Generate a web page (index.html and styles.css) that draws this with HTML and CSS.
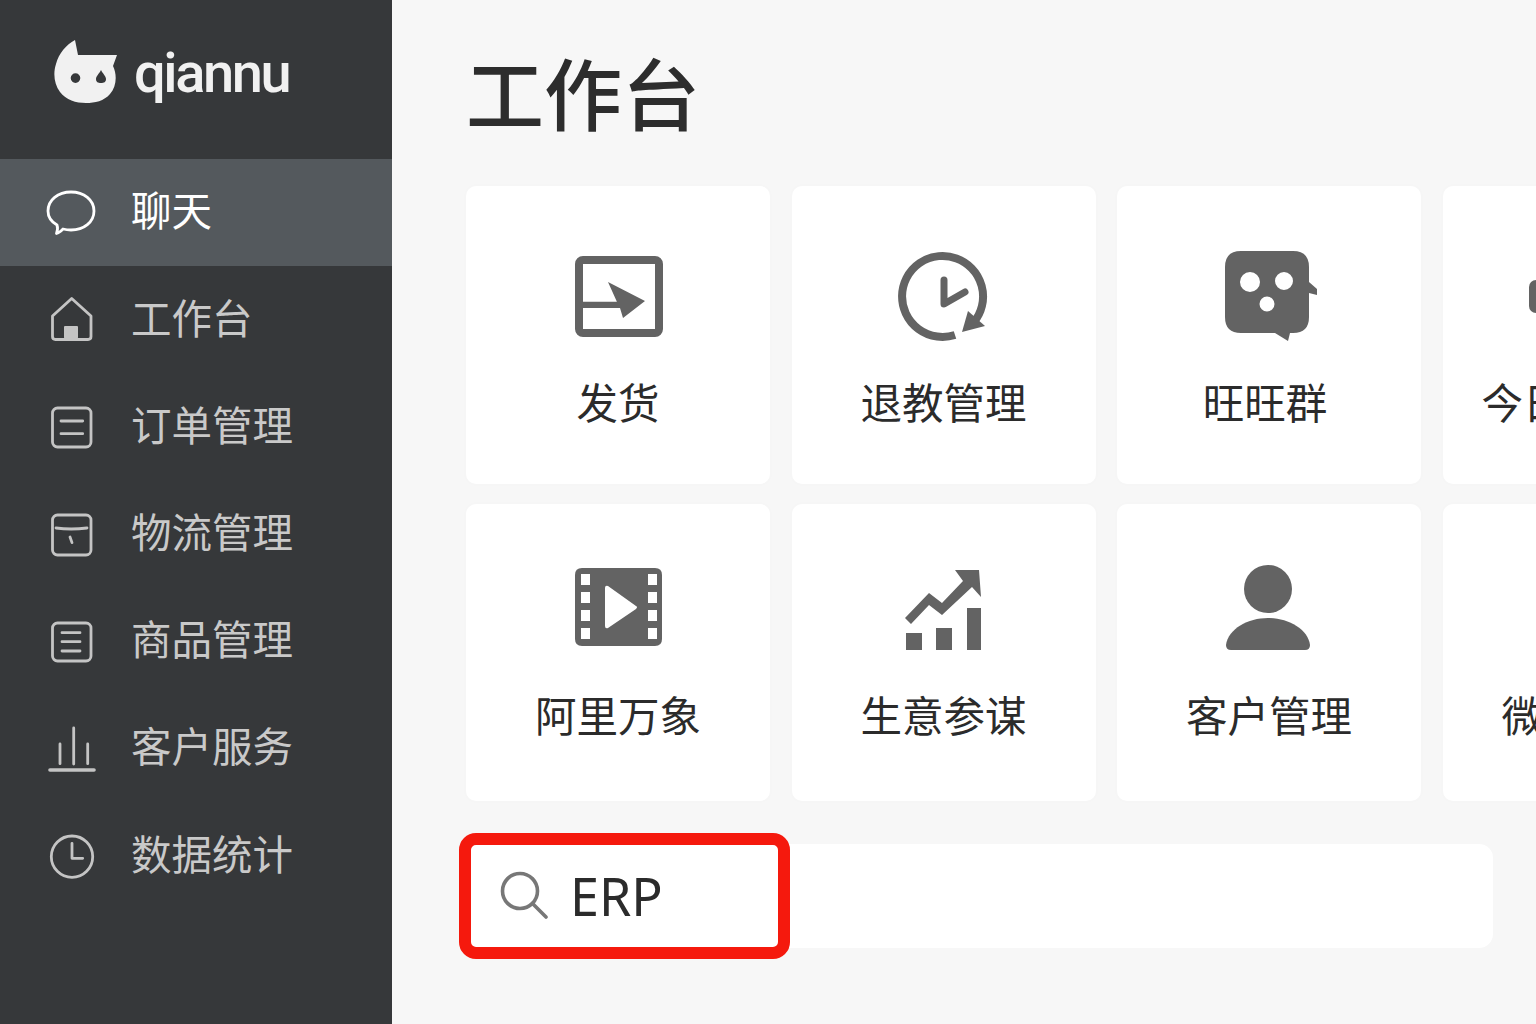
FILE: index.html
```html
<!DOCTYPE html>
<html lang="zh-CN">

<head>
  <meta charset="UTF-8">
  <meta name="viewport" content="width=device-width, initial-scale=1.0">
  <title>工作台</title>
  <link rel="stylesheet" href="styles.css">
</head>

<body>
  <div class="app">
    <!-- 左侧导航 -->
    <aside class="side">
      <div class="logo">
        <svg class="logo-cat" viewBox="0 0 64 64">
          <path fill="#f1f1f1" fill-rule="evenodd" d="M21 0 L24 15 L63 15 L59 26 C63 34 63 46 56 54 C50 61 41 63 32 63 C22 63 12 60 6 52 C0 44 -1 33 2 24 C5 13 12 5 21 0 Z M21.500 33.300 A4.800 4.800 0 1 0 21.500 42.900 A4.800 4.800 0 1 0 21.500 33.300 Z M47 30 C45 34 42 36 42 39 C42 42 44 43 47 43 C50 43 52 42 52 39 C52 36 49 34 47 30 Z" />
        </svg>
        <span class="logo-text">qiannu</span>
      </div>
      <nav class="nav">
        <a class="nav-item nav-item-on">
          <svg class="nav-icon" viewBox="0 0 50 48">
            <path d="M11 37 C4 33 2 28 2 23 C2 12 12 4 25 4 C38 4 48 12 48 23 C48 34 38 42 25 42 C22 42 19 41.500 17 41 C15 43 13 45 10.500 45.500 C11.500 43 12 40 11 37 Z" />
          </svg>
          <span>聊天</span>
        </a>
        <a class="nav-item">
          <svg class="nav-icon" viewBox="0 0 50 48">
            <path d="M6.500 21 L25.700 3.500 L45 21 V41.500 Q45 44.500 42 44.500 H9.500 Q6.500 44.500 6.500 41.500 Z" />
            <rect class="nav-fill" x="18" y="31" width="14" height="12.500" rx="1" />
          </svg>
          <span>工作台</span>
        </a>
        <a class="nav-item">
          <svg class="nav-icon" viewBox="0 0 50 48">
            <rect x="6.500" y="5" width="38.500" height="39" rx="5" />
            <path d="M15 18 H36.700 M15 30.700 H36.700" />
          </svg>
          <span>订单管理</span>
        </a>
        <a class="nav-item">
          <svg class="nav-icon" viewBox="0 0 50 48">
            <rect x="6.500" y="5" width="38.500" height="40" rx="5" />
            <path d="M10 18 Q25 20 41 18 M24 27 L26 32.600" />
          </svg>
          <span>物流管理</span>
        </a>
        <a class="nav-item">
          <svg class="nav-icon" viewBox="0 0 50 48">
            <rect x="6.500" y="6" width="38.500" height="38" rx="5" />
            <path d="M16 15.700 H34 M16 24.700 H34 M16 34 H34" />
          </svg>
          <span>商品管理</span>
        </a>
        <a class="nav-item">
          <svg class="nav-icon" viewBox="0 0 50 48">
            <path d="M14 20 V39.700 M27.700 4 V40 M41.700 20 V39.700" />
            <path class="nav-base" d="M4 46 H48" />
          </svg>
          <span>客户服务</span>
        </a>
        <a class="nav-item">
          <svg class="nav-icon" viewBox="0 0 50 48">
            <circle cx="26" cy="25.700" r="20.700" />
            <path d="M26 12.300 V27.300 H36.700" />
          </svg>
          <span>数据统计</span>
        </a>
      </nav>
    </aside>

    <main class="main">
      <h1 class="title">工作台</h1>

      <div class="tiles">
        <div class="tile">
          <div class="tile-icon">
            <svg class="icon-send" viewBox="0 0 88 81">
              <rect class="ic-line" x="4" y="4" width="80" height="73" rx="4" />
              <path d="M8 45.700 H46 V52 H8 Z M33 26 L70 45 L48 62 L45 52 V46 H42 Z" />
            </svg>
          </div>
          <div class="tile-name">发货</div>
        </div>
        <div class="tile">
          <div class="tile-icon">
            <svg class="icon-refund" viewBox="0 0 90 90">
              <path class="ic-line" d="M57 84 A40.500 40.500 0 1 1 76 71" />
              <path d="M70 60 L87 75 L64 81 Z" />
              <path class="ic-hand" d="M46 29 V53 L67 41" />
            </svg>
          </div>
          <div class="tile-name">退教管理</div>
        </div>
        <div class="tile">
          <div class="tile-icon">
            <svg class="icon-group" viewBox="0 0 93 91">
              <path fill-rule="evenodd" d="M16 0 H68 Q84 0 84 16 V31 L92 38 L92 44 L84 42 V66 Q84 82 68 82 H65 L63 90 L50 82 H16 Q0 82 0 66 V16 Q0 0 16 0 Z M25 21 A10 10 0 1 0 25 41 A10 10 0 1 0 25 21 Z M59 21 A9 9 0 1 0 59 39 A9 9 0 1 0 59 21 Z M42 45.500 A7.500 7.500 0 1 0 42 60.500 A7.500 7.500 0 1 0 42 45.500 Z" />
            </svg>
          </div>
          <div class="tile-name tile-name-left">旺旺群</div>
        </div>
        <div class="tile tile-cut">
          <div class="tile-icon">
            <svg class="icon-edge" viewBox="0 0 40 33">
              <rect width="40" height="33" rx="7" />
            </svg>
          </div>
          <div class="tile-name">今日任务</div>
        </div>

        <div class="tile tile-low">
          <div class="tile-icon">
            <svg class="icon-film" viewBox="0 0 87 78">
              <path fill-rule="evenodd" d="M7 0 H80 Q87 0 87 7 V71 Q87 78 80 78 H7 Q0 78 0 71 V7 Q0 0 7 0 Z M6 6 V17 H15 V6 Z M6 24 V35 H15 V24 Z M6 42 V53 H15 V42 Z M6 60 V71 H15 V60 Z M73 6 V17 H82 V6 Z M73 24 V35 H82 V24 Z M73 42 V53 H82 V42 Z M73 60 V71 H82 V60 Z M30 20 V58 Q30 61 33 60 L61 41 Q63 39 61 38 L33 18 Q30 17 30 20 Z" />
            </svg>
          </div>
          <div class="tile-name">阿里万象</div>
        </div>
        <div class="tile tile-low">
          <div class="tile-icon">
            <svg class="icon-chart" viewBox="0 0 77 80">
              <path d="M0 48 L24 23 L37 33 L58 11 L50 0 L74 0 L76 27 L67 17 L37 45 L24 35 L6 54 Z" />
              <rect x="1" y="63" width="16" height="17" />
              <rect x="31" y="58" width="16" height="22" />
              <rect x="62" y="38" width="14" height="42" />
            </svg>
          </div>
          <div class="tile-name">生意参谋</div>
        </div>
        <div class="tile tile-low">
          <div class="tile-icon">
            <svg class="icon-user" viewBox="0 0 84 85">
              <circle cx="42" cy="24" r="24" />
              <path d="M5 85 Q0 85 0 80 C2 64 22 53 42 53 C62 53 82 64 84 80 Q84 85 79 85 Z" />
            </svg>
          </div>
          <div class="tile-name">客户管理</div>
        </div>
        <div class="tile tile-low tile-cut tile-cut-far">
          <div class="tile-icon"></div>
          <div class="tile-name">微信管理</div>
        </div>
      </div>

      <div class="search">
        <div class="search-hit">
          <svg class="search-icon" viewBox="0 0 48 48">
            <circle cx="20" cy="20" r="17.500" />
            <path d="M32.500 32.500 L46 46" />
          </svg>
          <span class="search-text">ERP</span>
        </div>
      </div>
    </main>
  </div>
</body>

</html>
```

FILE: styles.css
```css
html,
body {
  margin: 0;
  height: 100%;
  overflow: hidden;
}

body {
  font-family: "Noto Sans CJK SC", "Noto Sans", sans-serif;
  background-color: #f7f7f7;
}

.app {
  display: flex;
  width: 1536px;
  height: 1024px;
}

/* 侧边栏 */
.side {
  flex: none;
  width: 392px;
  background-color: #36383a;
}

.logo {
  display: flex;
  align-items: center;
  height: 158.6px;
  padding-left: 54px;
  box-sizing: border-box;
}

.logo-cat {
  width: 64px;
  height: 64px;
  margin-top: -14px;
}

.logo-text {
  margin-left: 16px;
  margin-top: -13px;
  font-family: Roboto, sans-serif;
  font-size: 56px;
  font-weight: 500;
  letter-spacing: -2.4px;
  line-height: 1;
  color: #f1f1f1;
}

.nav-item {
  display: flex;
  align-items: center;
  height: 107.2px;
  padding-left: 46px;
  font-size: 40.5px;
  color: #c9c9c9;
}

.nav-item span {
  margin-left: 35px;
  margin-top: -5px;
  line-height: 1;
}

.nav-item-on {
  background-color: #54595d;
  color: #fff;
}

.nav-icon {
  flex: none;
  width: 50px;
  height: 48px;
  fill: none;
  stroke: #c4c4c4;
  stroke-width: 2.8;
  stroke-linecap: round;
  stroke-linejoin: round;
}

.nav-item-on .nav-icon {
  stroke: #fff;
}

.nav-icon .nav-fill {
  fill: #c4c4c4;
  stroke: none;
}

.nav-icon .nav-base {
  stroke-width: 3.6;
}

/* 主区域 */
.main {
  flex: 1;
  min-width: 0;
  padding-left: 74px;
  overflow: hidden;
}

.title {
  height: 186px;
  margin: 0;
  box-sizing: border-box;
  font-size: 78px;
  font-weight: 500;
  line-height: 182px;
  color: #2d2d2d;
}

.tiles {
  display: grid;
  grid-template-columns: repeat(4, 304px);
  grid-template-rows: 298px 297px;
  column-gap: 21.5px;
  row-gap: 20px;
}

.tile {
  display: flex;
  flex-direction: column;
  align-items: center;
  padding-top: 60px;
  box-sizing: border-box;
  background-color: #fff;
  border-radius: 10px;
  box-shadow: 0 0 6px rgba(0, 0, 0, .015);
}

.tile-low {
  padding-top: 53px;
}

.tile-icon {
  display: flex;
  align-items: center;
  justify-content: center;
  height: 100px;
}

.tile-icon svg {
  fill: #636363;
}

.tile-icon .ic-line {
  fill: none;
  stroke: #636363;
  stroke-width: 8;
}

.tile-icon .ic-hand {
  fill: none;
  stroke: #636363;
  stroke-width: 7;
  stroke-linecap: round;
  stroke-linejoin: round;
}

.icon-send {
  width: 88px;
  height: 81px;
  margin-left: 1px;
}

.icon-refund {
  width: 90px;
  height: 90px;
  margin-left: -1px;
}

.icon-group {
  width: 93px;
  height: 91px;
  margin-left: 5px;
}

.icon-edge {
  width: 40px;
  height: 33px;
  margin-left: 86px;
}

.icon-film {
  width: 87px;
  height: 78px;
}

.icon-chart {
  width: 77px;
  height: 80px;
  margin-top: 6px;
}

.icon-user {
  width: 84px;
  height: 85px;
  margin-left: -3px;
}

.tile-name {
  margin-top: 34px;
  font-size: 41.5px;
  line-height: 42px;
  white-space: nowrap;
  color: #2b2b2b;
}

.tile-low .tile-name {
  margin-top: 36px;
}

.tile-name-left {
  margin-left: -8px;
}

.tile-cut {
  align-items: flex-start;
}

.tile-cut .tile-name {
  margin-left: 39px;
}

.tile-cut-far .tile-name {
  margin-left: 59px;
}

/* 搜索栏 */
.search {
  display: flex;
  width: 1027px;
  height: 104px;
  margin-top: 43px;
  background-color: #fff;
  border-radius: 14px;
}

.search-hit {
  display: flex;
  align-items: center;
  flex: none;
  width: 331px;
  margin: -11px 0 -11px -7px;
  padding-left: 29px;
  box-sizing: border-box;
  background-color: #fff;
  border: 12px solid #f5190d;
  border-radius: 17px;
}

.search-icon {
  flex: none;
  width: 48px;
  height: 48px;
  margin-top: -2px;
  fill: none;
  stroke: #777;
  stroke-width: 3.6;
  stroke-linecap: round;
}

.search-text {
  margin-left: 22px;
  font-family: "Noto Sans", sans-serif;
  font-size: 52px;
  line-height: 1;
  color: #2b2b2b;
}
```
